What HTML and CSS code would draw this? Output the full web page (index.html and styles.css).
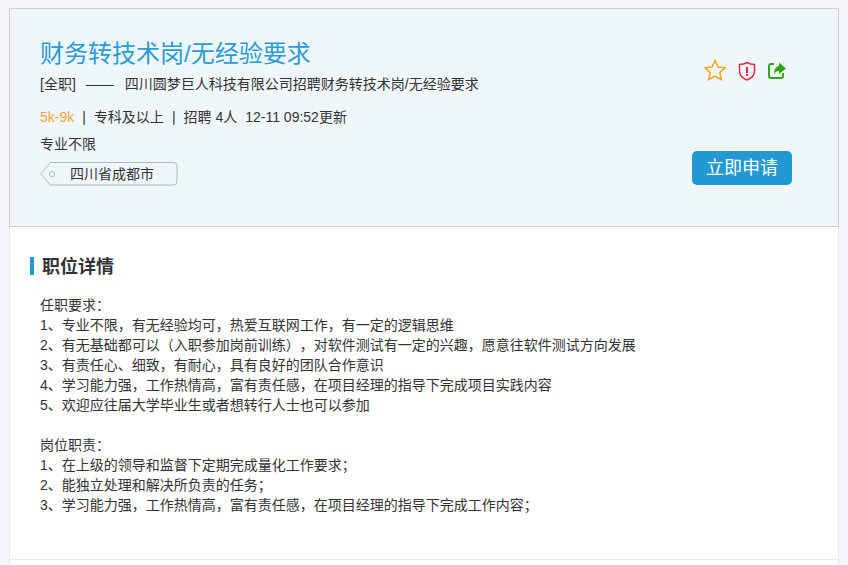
FILE: index.html
```html
<!DOCTYPE html>
<html lang="zh-CN">
<head>
    <meta charset="UTF-8">
    <title>财务转技术岗/无经验要求</title>
    <link rel="stylesheet" href="styles.css">
</head>
<body>
    <div class="job">
        <!-- Header -->
        <div class="job-head">
            <div class="job-info">
                <h1 class="job-title">财务转技术岗/无经验要求</h1>
                <p class="job-sub">[全职]<span class="dash">——</span>四川圆梦巨人科技有限公司招聘财务转技术岗/无经验要求</p>
                <p class="job-meta"><span class="salary">5k-9k</span><span class="sep">|</span>专科及以上<span class="sep">|</span>招聘 4人<span class="time">12-11 09:52更新</span></p>
                <p class="job-major">专业不限</p>
                <div class="tag">
                    <svg class="tag-shape" width="138" height="24" viewBox="0 0 138 24">
                        <path d="M10.500 .5H133.500a3.500 3.500 0 0 1 3.500 3.500V19.500a3.500 3.500 0 0 1-3.500 3.500H10.500L.8 12Z" fill="none" stroke="#b4b8bc"/>
                        <circle cx="12" cy="12" r="2.600" fill="none" stroke="#b4b8bc"/>
                    </svg>
                    <span class="tag-text">四川省成都市</span>
                </div>
            </div>
            <div class="job-side">
                <div class="icons">
                    <svg width="22" height="22" viewBox="0 0 22 22"><path d="M11 1.500 14 8 21 8.800 15.800 13.500 17.300 20.500 11 17 4.700 20.500 6.200 13.500 1 8.800 8 8Z" fill="none" stroke="#f9a11b" stroke-width="1.500"/></svg>
                    <svg width="18" height="22" viewBox="0 0 18 22"><path d="M9 3.500C11.500 5 14 5.500 16.500 5.500V12C16.500 16.500 13 19.500 9 21 5 19.500 1.500 16.500 1.500 12V5.500C4 5.500 6.500 5 9 3.500Z" fill="none" stroke="#f1283c" stroke-width="1.500"/><path d="M8 8h2v6H8zM8 15h2v2H8z" fill="#f1283c"/></svg>
                    <svg width="18" height="22" viewBox="0 0 18 22"><path d="M6 5H3a2 2 0 0 0-2 2V17a2 2 0 0 0 2 2H13a2 2 0 0 0 2-2V14" fill="none" stroke="#2ea616" stroke-width="2"/><path d="M11 3.500 18 9.500 11 15V12C8.500 12 7 13 6 15.500 6 10.500 8 7.500 11 7Z" fill="#2ea616"/></svg>
                </div>
                <a class="apply" href="#">立即申请</a>
            </div>
        </div>

        <!-- Detail -->
        <div class="job-body">
            <h2 class="section-title">职位详情</h2>
            <div class="detail">
                <p>任职要求：</p>
                <p>1、专业不限，有无经验均可，热爱互联网工作，有一定的逻辑思维</p>
                <p>2、有无基础都可以（入职参加岗前训练），对软件测试有一定的兴趣，愿意往软件测试方向发展</p>
                <p>3、有责任心、细致，有耐心，具有良好的团队合作意识</p>
                <p>4、学习能力强，工作热情高，富有责任感，在项目经理的指导下完成项目实践内容</p>
                <p>5、欢迎应往届大学毕业生或者想转行人士也可以参加</p>
                <br>
                <p>岗位职责：</p>
                <p>1、在上级的领导和监督下定期完成量化工作要求；</p>
                <p>2、能独立处理和解决所负责的任务；</p>
                <p>3、学习能力强，工作热情高，富有责任感，在项目经理的指导下完成工作内容；</p>
            </div>
        </div>
        <div class="job-foot"></div>
    </div>
</body>
</html>
```

FILE: styles.css
```css
html, body {
    margin: 0;
    padding: 0;
    height: 565px;
    overflow: hidden;
}
body {
    background-color: #f5f7fb;
    color: #333;
    font-family: "Liberation Sans", "Noto Sans CJK SC", sans-serif;
    font-size: 14px;
    text-spacing-trim: space-all;
}
p {
    margin: 0;
}
.job {
    margin: 8px 0 0 9px;
    width: 830px;
    box-sizing: border-box;
    background-color: #fff;
    border-left: 1px solid #e8ebef;
    border-right: 1px solid #e8ebef;
}
.job-head {
    display: flex;
    justify-content: space-between;
    height: 219px;
    box-sizing: border-box;
    padding: 28px 46px 0 30px;
    background-color: #f0f7fb;
    border: 1px solid #ccd0d4;
    margin: 0 -1px;
}
.job-title {
    margin: 0;
    font-size: 24px;
    font-weight: normal;
    line-height: 34px;
    color: #2b9bd5;
}
.job-sub {
    margin-top: 3px;
    line-height: 20px;
}
.dash {
    margin: 0 11px 0 10px;
}
.job-meta {
    margin-top: 13px;
    line-height: 20px;
}
.salary {
    color: #f9a23c;
}
.sep {
    margin: 0 8px;
}
.time {
    margin-left: 8px;
}
.job-major {
    margin-top: 7px;
    line-height: 20px;
}
.tag {
    position: relative;
    width: 138px;
    height: 24px;
    margin-top: 8px;
}
.tag-shape {
    position: absolute;
    left: 0;
    top: 0;
}
.tag-text {
    position: absolute;
    left: 30px;
    top: 0;
    line-height: 24px;
}
.job-side {
    width: 100px;
    display: flex;
    flex-direction: column;
}
.icons {
    display: flex;
    gap: 12px;
    margin-top: 22px;
    padding-left: 12px;
    height: 22px;
}
.apply {
    margin-top: 70px;
    height: 34px;
    line-height: 34px;
    border-radius: 5px;
    background-color: #2299d2;
    color: #fff;
    font-size: 18px;
    text-align: center;
    text-decoration: none;
}
.job-body {
    padding: 30px 20px 0;
    height: 332px;
    box-sizing: border-box;
}
.section-title {
    margin: 0;
    font-size: 18px;
    height: 18px;
    line-height: 20px;
    padding-left: 8px;
    border-left: 4px solid #2299d2;
    color: #333;
}
.detail {
    margin-top: 20px;
    padding-left: 10px;
    line-height: 20px;
}
.job-foot {
    border-top: 1px solid #e8e8e8;
    height: 20px;
}
```
